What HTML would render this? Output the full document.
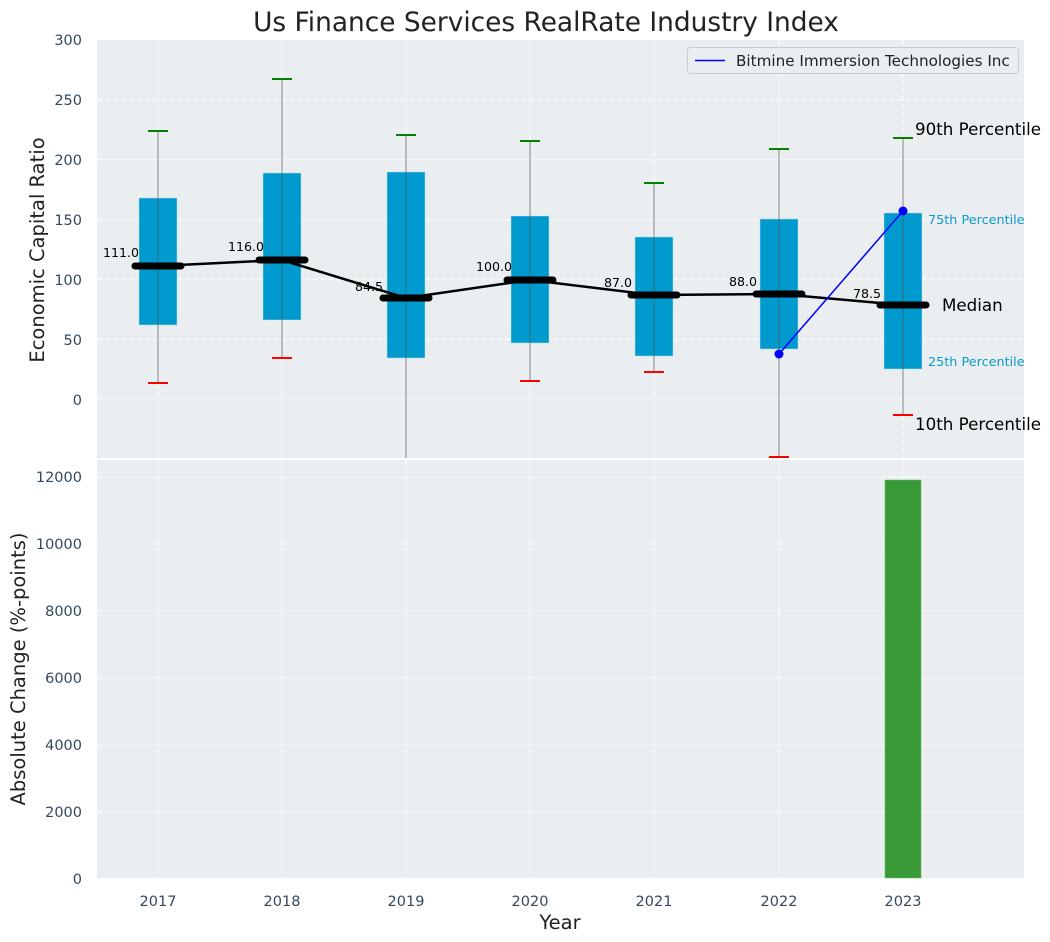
<!DOCTYPE html>
<html><head><meta charset="utf-8"><style>
html,body{margin:0;padding:0;background:#fff;}
svg{display:block;font-family:"DejaVu Sans","Liberation Sans",sans-serif;}
</style></head><body>
<svg width="1050" height="942" viewBox="0 0 1050 942" xmlns="http://www.w3.org/2000/svg">
<rect width="1050" height="942" fill="#fff"/>
<text x="546" y="31" font-size="26.4" text-anchor="middle" fill="#222">Us Finance Services RealRate Industry Index</text>
<!-- top axes -->
<rect x="97" y="40" width="927" height="418" fill="#eaeef0"/>
<g stroke="#fff" stroke-width="1" stroke-dasharray="5,3">
<line x1="97" x2="1024" y1="99.8" y2="99.8"/><line x1="97" x2="1024" y1="159.6" y2="159.6"/>
<line x1="97" x2="1024" y1="219.5" y2="219.5"/><line x1="97" x2="1024" y1="279.3" y2="279.3"/>
<line x1="97" x2="1024" y1="339.2" y2="339.2"/><line x1="97" x2="1024" y1="399" y2="399"/>
<line x1="158" x2="158" y1="40" y2="458"/><line x1="282" x2="282" y1="40" y2="458"/>
<line x1="406" x2="406" y1="40" y2="458"/><line x1="530" x2="530" y1="40" y2="458"/>
<line x1="654" x2="654" y1="40" y2="458"/><line x1="779" x2="779" y1="40" y2="458"/>
<line x1="903" x2="903" y1="40" y2="458"/>
</g>
<g font-size="14.5" fill="#34495e" text-anchor="end">
<text x="82" y="45">300</text><text x="82" y="105">250</text><text x="82" y="165">200</text>
<text x="82" y="225">150</text><text x="82" y="285">100</text><text x="82" y="345">50</text><text x="82" y="405">0</text>
</g>
<text transform="translate(44,250) rotate(-90)" font-size="19.5" fill="#222" text-anchor="middle">Economic Capital Ratio</text>
<!-- boxes -->
<g fill="#009ace" stroke="#b8dcea" stroke-width="0.5">
<rect x="139" y="198" width="38" height="127"/>
<rect x="263" y="173" width="38" height="147"/>
<rect x="387" y="172" width="38" height="186"/>
<rect x="511" y="216" width="38" height="127"/>
<rect x="635" y="237" width="38" height="119"/>
<rect x="760" y="219" width="38" height="130"/>
<rect x="884" y="213" width="38" height="156"/>
</g>
<g stroke="#555" stroke-opacity="0.7" stroke-width="1">
<line x1="158" x2="158" y1="131" y2="383"/><line x1="282" x2="282" y1="79" y2="358"/>
<line x1="406" x2="406" y1="135" y2="458"/><line x1="530" x2="530" y1="141" y2="381"/>
<line x1="654" x2="654" y1="183" y2="372"/><line x1="779" x2="779" y1="149" y2="457"/>
<line x1="903" x2="903" y1="138" y2="415"/>
</g>
<g stroke="#008000" stroke-width="2">
<line x1="148" x2="168" y1="131" y2="131"/><line x1="272" x2="292" y1="79" y2="79"/>
<line x1="396" x2="416" y1="135" y2="135"/><line x1="520" x2="540" y1="141" y2="141"/>
<line x1="644" x2="664" y1="183" y2="183"/><line x1="769" x2="789" y1="149" y2="149"/>
<line x1="893" x2="913" y1="138" y2="138"/>
</g>
<g stroke="#f00" stroke-width="2">
<line x1="148" x2="168" y1="383" y2="383"/><line x1="272" x2="292" y1="358" y2="358"/>
<line x1="520" x2="540" y1="381" y2="381"/><line x1="644" x2="664" y1="372" y2="372"/>
<line x1="769" x2="789" y1="457" y2="457"/><line x1="893" x2="913" y1="415" y2="415"/>
</g>
<polyline points="158,266 282,260 406,298 530,280 654,295 779,294 903,305" fill="none" stroke="#000" stroke-width="2.5"/>
<g stroke="#000" stroke-width="7" stroke-linecap="round">
<line x1="135" x2="181" y1="266" y2="266"/><line x1="259" x2="305" y1="260" y2="260"/>
<line x1="383" x2="429" y1="298" y2="298"/><line x1="507" x2="553" y1="280" y2="280"/>
<line x1="631" x2="677" y1="295" y2="295"/><line x1="756" x2="802" y1="294" y2="294"/>
<line x1="880" x2="926" y1="305" y2="305"/>
</g>
<g font-size="12.6" fill="#000" text-anchor="end">
<text x="139" y="257">111.0</text><text x="264" y="251">116.0</text><text x="383" y="291">84.5</text>
<text x="512" y="271">100.0</text><text x="632" y="287">87.0</text><text x="757" y="286">88.0</text><text x="881" y="298">78.5</text>
</g>
<line x1="779" y1="354" x2="903" y2="211" stroke="#00f" stroke-width="1.5"/>
<circle cx="779" cy="354" r="4.5" fill="#00f"/><circle cx="903" cy="211" r="4.5" fill="#00f"/>
<g font-size="16.7" fill="#000">
<text x="915" y="135">90th Percentile</text><text x="942" y="311">Median</text><text x="915" y="430">10th Percentile</text>
</g>
<g font-size="12.8" fill="#0a9ac9">
<text x="928" y="224">75th Percentile</text><text x="928" y="366">25th Percentile</text>
</g>
<rect x="687.5" y="47.5" width="331" height="26" rx="3" fill="#eaeef0" stroke="#ccc"/>
<line x1="695" x2="725" y1="60.5" y2="60.5" stroke="#00f" stroke-width="1.5"/>
<text x="736" y="66" font-size="15.2" fill="#222">Bitmine Immersion Technologies Inc</text>
<!-- bottom axes -->
<rect x="97" y="460" width="927" height="418" fill="#eaeef0"/>
<g stroke="#fff" stroke-width="1" stroke-dasharray="5,3">
<line x1="97" x2="1024" y1="477" y2="477"/><line x1="97" x2="1024" y1="544" y2="544"/>
<line x1="97" x2="1024" y1="611" y2="611"/><line x1="97" x2="1024" y1="678" y2="678"/>
<line x1="97" x2="1024" y1="745" y2="745"/><line x1="97" x2="1024" y1="812" y2="812"/>
<line x1="158" x2="158" y1="460" y2="878"/><line x1="282" x2="282" y1="460" y2="878"/>
<line x1="406" x2="406" y1="460" y2="878"/><line x1="530" x2="530" y1="460" y2="878"/>
<line x1="654" x2="654" y1="460" y2="878"/><line x1="779" x2="779" y1="460" y2="878"/>
<line x1="903" x2="903" y1="460" y2="878"/>
</g>
<rect x="885" y="480" width="36" height="398" fill="#3a9a3a" stroke="#5cb85c" stroke-width="0.5"/>
<g font-size="14.5" fill="#34495e" text-anchor="end">
<text x="82" y="482">12000</text><text x="82" y="549">10000</text><text x="82" y="616">8000</text>
<text x="82" y="683">6000</text><text x="82" y="750">4000</text><text x="82" y="817">2000</text><text x="82" y="884">0</text>
</g>
<g font-size="14.5" fill="#34495e" text-anchor="middle">
<text x="158" y="906">2017</text><text x="282" y="906">2018</text><text x="406" y="906">2019</text>
<text x="530" y="906">2020</text><text x="654" y="906">2021</text><text x="779" y="906">2022</text><text x="903" y="906">2023</text>
</g>
<text x="560" y="929" font-size="19.5" fill="#222" text-anchor="middle">Year</text>
<text transform="translate(25,669) rotate(-90)" font-size="19.5" fill="#222" text-anchor="middle">Absolute Change (%-points)</text>
</svg>
</body></html>
